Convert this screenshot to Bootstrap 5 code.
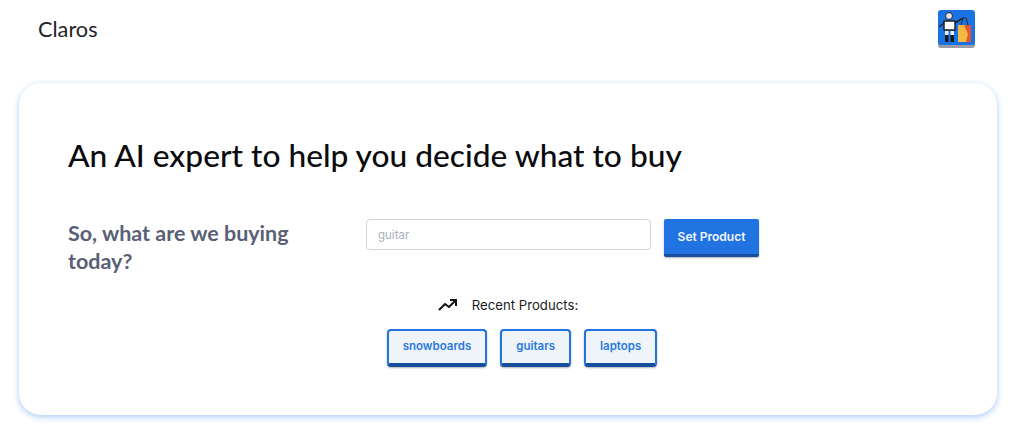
<!DOCTYPE html>
<html lang="en">
<head>
  <meta charset="UTF-8">
  <title>Claros</title>
  <meta name="viewport" content="width=device-width, initial-scale=1">
  <link href="https://cdn.jsdelivr.net/npm/bootstrap@5.3.3/dist/css/bootstrap.min.css" rel="stylesheet">
  <style>
    body {
      background: #fff;
      font-family: Inter, "Liberation Sans", sans-serif;
      height: 447px;
      overflow: hidden;
    }
    .top-bar {
      height: 83px;
      padding: 10px 48px 0 38px;
    }
    .brand-name {
      font-family: Lato, sans-serif;
      font-size: 21.7px;
      line-height: 39px;
      color: #1f2328;
    }
    .logo-box {
      display: block;
      width: 38px;
      height: 39px;
    }
    .main-panel {
      margin: 0 27px 0 19px;
      height: 332px;
      padding: 49px 49px 0;
      border-radius: 22px;
      background: #fff;
      box-shadow: 0 2px 6px rgba(37, 125, 235, .4);
    }
    .main-title {
      font-family: Lato, sans-serif;
      font-size: 31.7px;
      font-weight: 500;
      line-height: 46px;
      color: #0b0b0f;
      margin: 0 0 41px;
    }
    .ask-label {
      width: 298px;
      padding: 0 60px 0 0;
      font-family: Lato, sans-serif;
      font-size: 21.5px;
      font-weight: 700;
      line-height: 28px;
      color: #596075;
    }
    .product-input {
      width: 285px;
      height: 31px;
      font-size: 11.5px;
      padding: 0 11px;
      border: 1px solid #ced4da;
      border-radius: 4px;
    }
    .product-input::placeholder { color: #a9afb8; }
    .set-btn {
      height: 38px;
      width: 95px;
      padding: 0;
      margin-left: 13px;
      font-size: 12px;
      font-weight: 600;
      color: #f1f6fd;
      background: #2273e2;
      border: 0;
      border-bottom: 3px solid #174f9f;
      border-radius: 2px;
      box-shadow: 0 1px 2px rgba(0, 0, 0, .3);
    }
    .recent-row {
      margin-top: 20px;
      font-size: 13.2px;
      line-height: 20px;
      color: #1c1c1e;
    }
    .recent-row svg { margin-right: 14px; }
    .tag-row {
      margin-top: 14px;
      padding-left: 28px;
      gap: 13px;
    }
    .tag-btn {
      height: 38px;
      padding: 0 14px;
      font-size: 11.5px;
      font-weight: 600;
      color: #2a78e0;
      background: #eff4f8;
      border: 2px solid #2273e2;
      border-bottom: 4px solid #174f9f;
      border-radius: 4px;
      box-shadow: 0 1px 2px rgba(0, 0, 0, .3);
    }
  </style>
</head>
<body>

<!-- Header -->
<div class="top-bar d-flex justify-content-between align-items-start">
  <span class="brand-name">Claros</span>
  <svg class="logo-box" viewBox="0 0 38 39">
    <rect x="0" y="1" width="37" height="37" rx="3" fill="#9a9da3"/>
    <rect x="0" y="0" width="37" height="35" rx="3" fill="#1a73e4"/>
    <rect x="20" y="15" width="13" height="17" fill="#f4b942"/>
    <polygon points="26,15 33,15 33,32 28,32 30,24" fill="#e5562c"/>
    <path d="M23 15 L25 8 L28 8 L30 15" fill="none" stroke="#2a2a2a" stroke-width="1"/>
    <circle cx="11" cy="6" r="3.500" fill="#dfe3e8" stroke="#222"/>
    <rect x="6" y="11" width="11" height="9" fill="#fff" stroke="#222" stroke-width="1.500"/>
    <path d="M1 17 L6 13 M17 13 L25 8" stroke="#222" stroke-width="1.500"/>
    <rect x="7" y="21" width="3.500" height="4" fill="#eee"/>
    <rect x="12.500" y="21" width="3.500" height="4" fill="#eee"/>
    <rect x="7" y="25" width="3.500" height="7" fill="#1b1b1b"/>
    <rect x="12.500" y="25" width="3.500" height="7" fill="#1b1b1b"/>
  </svg>
</div>

<!-- Main card -->
<div class="main-panel">
  <h1 class="main-title">An AI expert to help you decide what to buy</h1>

  <div class="d-flex align-items-start">
    <div class="ask-label">So, what are we buying today?</div>
    <input type="text" class="form-control product-input" placeholder="guitar">
    <button type="button" class="btn set-btn">Set Product</button>
  </div>

  <div class="recent-row d-flex justify-content-center align-items-center">
    <svg width="20" height="14" viewBox="0 0 20 14" fill="none" stroke="#111" stroke-width="2">
      <path d="M1 12 L7 6 L11 9 L18 2"/>
      <path d="M12 2 H18 V8"/>
    </svg>
    <span>Recent Products:</span>
  </div>

  <div class="tag-row d-flex justify-content-center">
    <button type="button" class="btn tag-btn">snowboards</button>
    <button type="button" class="btn tag-btn">guitars</button>
    <button type="button" class="btn tag-btn">laptops</button>
  </div>
</div>

</body>
</html>
